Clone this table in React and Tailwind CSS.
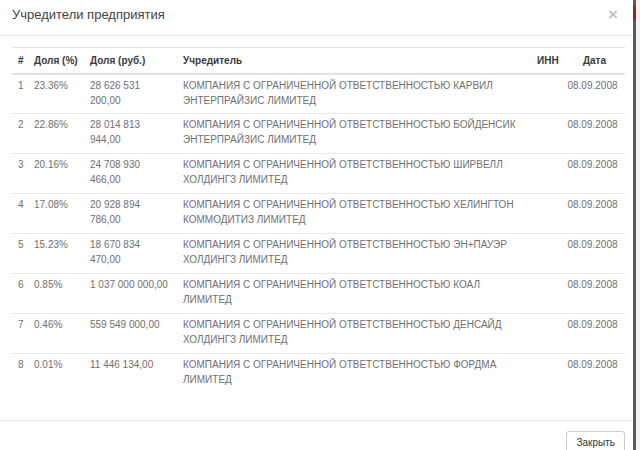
const rows = [
  ["1", "23.36%", ["28 626 531", "200,00"], ["КОМПАНИЯ С ОГРАНИЧЕННОЙ ОТВЕТСТВЕННОСТЬЮ КАРВИЛ", "ЭНТЕРПРАЙЗИС ЛИМИТЕД"]],
  ["2", "22.86%", ["28 014 813", "944,00"], ["КОМПАНИЯ С ОГРАНИЧЕННОЙ ОТВЕТСТВЕННОСТЬЮ БОЙДЕНСИК", "ЭНТЕРПРАЙЗИС ЛИМИТЕД"]],
  ["3", "20.16%", ["24 708 930", "466,00"], ["КОМПАНИЯ С ОГРАНИЧЕННОЙ ОТВЕТСТВЕННОСТЬЮ ШИРВЕЛЛ", "ХОЛДИНГЗ ЛИМИТЕД"]],
  ["4", "17.08%", ["20 928 894", "786,00"], ["КОМПАНИЯ С ОГРАНИЧЕННОЙ ОТВЕТСТВЕННОСТЬЮ ХЕЛИНГТОН", "КОММОДИТИЗ ЛИМИТЕД"]],
  ["5", "15.23%", ["18 670 834", "470,00"], ["КОМПАНИЯ С ОГРАНИЧЕННОЙ ОТВЕТСТВЕННОСТЬЮ ЭН+ПАУЭР", "ХОЛДИНГЗ ЛИМИТЕД"]],
  ["6", "0.85%", ["1 037 000 000,00"], ["КОМПАНИЯ С ОГРАНИЧЕННОЙ ОТВЕТСТВЕННОСТЬЮ КОАЛ", "ЛИМИТЕД"]],
  ["7", "0.46%", ["559 549 000,00"], ["КОМПАНИЯ С ОГРАНИЧЕННОЙ ОТВЕТСТВЕННОСТЬЮ ДЕНСАЙД", "ХОЛДИНГЗ ЛИМИТЕД"]],
  ["8", "0.01%", ["11 446 134,00"], ["КОМПАНИЯ С ОГРАНИЧЕННОЙ ОТВЕТСТВЕННОСТЬЮ ФОРДМА", "ЛИМИТЕД"]],
];

function Lines({ items }) {
  return items.map((t, i) => (
    <div key={i} className="whitespace-nowrap">{t}</div>
  ));
}

export default function App() {
  return (
    <div
      className="flex w-[640px] h-[450px] overflow-hidden bg-white"
      style={{ fontFamily: '"Liberation Sans", Arial, sans-serif' }}
    >
      <div className="w-[633px] shrink-0 flex flex-col bg-white">
        <div className="h-[36px] shrink-0 flex items-start justify-between border-b border-[#e8e8e8] pl-[12px] pr-[15px] pt-[6px]">
          <div className="text-[13px] text-[#444] leading-[18px]">Учредители предприятия</div>
          <div className="text-[17px] font-bold text-[#c4c4c4] leading-[16px] mt-[1px]">×</div>
        </div>
        <div className="pl-[12px] pr-[8px] pt-[11px] h-[385px] shrink-0 border-b border-[#e8e8e8]">
          <table className="w-[613px] table-fixed border-collapse text-[10px] text-[#707070]">
            <colgroup>
              <col className="w-[16px]" />
              <col className="w-[56px]" />
              <col className="w-[93px]" />
              <col className="w-[354px]" />
              <col className="w-[29px]" />
              <col className="w-[65px]" />
            </colgroup>
            <thead>
              <tr className="h-[26px] border-t border-[#e4e4e4] border-b-2 border-b-[#e4e4e4] text-[#3a3a3a] font-bold">
                <th className="text-left pl-[6px] font-bold">#</th>
                <th className="text-left pl-[6px] font-bold">Доля (%)</th>
                <th className="text-left pl-[6px] font-bold">Доля (руб.)</th>
                <th className="text-left pl-[6px] font-bold">Учредитель</th>
                <th className="text-left pl-[6px] font-bold">ИНН</th>
                <th className="text-center pl-[4px] font-bold">Дата</th>
              </tr>
            </thead>
            <tbody>
              {rows.map((r, i) => (
                <tr
                  key={r[0]}
                  className={
                    "h-[40px] align-top leading-[15px] " +
                    (i < rows.length - 1 ? "border-b border-[#e8e8e8]" : "")
                  }
                >
                  <td className="pl-[6px] pt-[3px]">{r[0]}</td>
                  <td className="pl-[6px] pt-[3px]">{r[1]}</td>
                  <td className="pl-[6px] pt-[3px]"><Lines items={r[2]} /></td>
                  <td className="pl-[6px] pt-[3px]"><Lines items={r[3]} /></td>
                  <td className="pl-[6px] pt-[3px]"></td>
                  <td className="pt-[3px] text-center pl-[0px]">08.09.2008</td>
                </tr>
              ))}
            </tbody>
          </table>
        </div>
        <div className="flex justify-end pr-[8px] pt-[10px]">
          <button className="h-[28px] px-[9px] border border-[#ccc] rounded-[3px] bg-white text-[10px] text-[#333] leading-[14px] pb-[4px]">
            Закрыть
          </button>
        </div>
      </div>
      <div className="flex-1 flex">
        <div className="w-[3px] bg-[#5a5a5a] flex flex-col">
          <div className="h-[6px]" />
          <div className="h-[14px] bg-[#8a2a35]" />
        </div>
        <div className="flex-1 bg-[#f2f2f2]" />
      </div>
    </div>
  );
}
